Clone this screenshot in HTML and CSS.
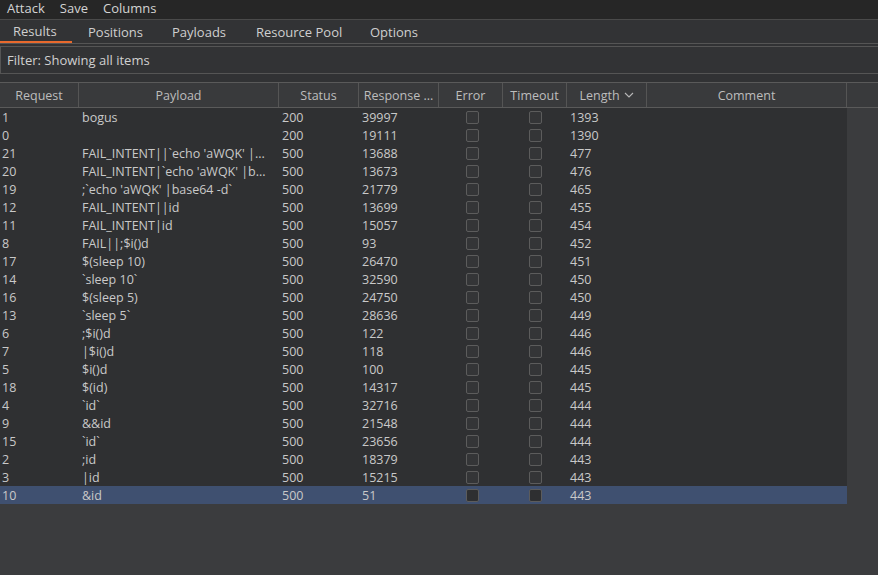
FILE: index.html
```html
<!DOCTYPE html>
<html>
<head>
<meta charset="utf-8">
<link rel="stylesheet" href="styles.css">
</head>
<body>
<div class="menubar">
  <span class="menu-item">Attack</span>
  <span class="menu-item">Save</span>
  <span class="menu-item">Columns</span>
</div>
<div class="tabs">
  <span class="tab active">Results</span>
  <span class="tab">Positions</span>
  <span class="tab">Payloads</span>
  <span class="tab">Resource Pool</span>
  <span class="tab">Options</span>
</div>
<div class="filter-wrap">
  <div class="filter">Filter: Showing all items</div>
</div>
<div class="table-area">
  <div class="thead">
    <div class="th c-req">Request</div>
    <div class="th c-pay">Payload</div>
    <div class="th c-st">Status</div>
    <div class="th c-resp">Response ...</div>
    <div class="th c-err">Error</div>
    <div class="th c-to">Timeout</div>
    <div class="th c-len">Length <svg class="sort" width="10" height="6" viewBox="0 0 10 6"><path d="M1 1 L5 5 L9 1" fill="none" stroke="#b8b8b8" stroke-width="1.1"/></svg></div>
    <div class="th c-com">Comment</div>
    <div class="th c-pad"></div>
  </div>
  <div class="tbody" id="tbody"></div>
</div>
<script>
var rows=[["1","bogus","200","39997","1393"],["0","","200","19111","1390"],["21","FAIL_INTENT||`echo 'aWQK' |...","500","13688","477"],["20","FAIL_INTENT|`echo 'aWQK' |b...","500","13673","476"],["19",";`echo 'aWQK' |base64 -d`","500","21779","465"],["12","FAIL_INTENT||id","500","13699","455"],["11","FAIL_INTENT|id","500","15057","454"],["8","FAIL||;$i()d","500","93","452"],["17","$(sleep 10)","500","26470","451"],["14","`sleep 10`","500","32590","450"],["16","$(sleep 5)","500","24750","450"],["13","`sleep 5`","500","28636","449"],["6",";$i()d","500","122","446"],["7","|$i()d","500","118","446"],["5","$i()d","500","100","445"],["18","$(id)","500","14317","445"],["4","`id`","500","32716","444"],["9","&&id","500","21548","444"],["15","`id`","500","23656","444"],["2",";id","500","18379","443"],["3","|id","500","15215","443"],["10","&id","500","51","443"]];
var tb=document.getElementById('tbody');
rows.forEach(function(r,i){
  var d=document.createElement('div');
  d.className='tr'+(i===rows.length-1?' sel':'');
  function c(cls,t){var s=document.createElement('div');s.className='td '+cls;if(t!==null)s.textContent=t;d.appendChild(s);return s;}
  c('c-req',r[0]);c('c-pay',r[1]);c('c-st',r[2]);c('c-resp',r[3]);
  c('c-err ck',null).appendChild(Object.assign(document.createElement('span'),{className:'box'}));
  c('c-to ck',null).appendChild(Object.assign(document.createElement('span'),{className:'box'}));
  c('c-len',r[4]);c('c-com','');
  tb.appendChild(d);
});
</script>
</body>
</html>
```
FILE: styles.css
```css
html,body{margin:0;padding:0;}
body{
  width:878px;height:575px;overflow:hidden;
  background:#3b3c3e;
  font-family:"Open Sans","Noto Sans",sans-serif;
  font-size:12.5px;color:#cfcfcf;
}
.menubar{
  height:19px;background:#262626;display:flex;align-items:flex-start;
  padding-left:7px;border-bottom:1px solid #4a4a4a;box-sizing:content-box;
}
.menu-item{margin-right:15px;color:#d4d4d4;font-size:13px;line-height:17px;}
.tabs{
  height:23px;background:#323335;display:flex;align-items:stretch;
  border-bottom:1px solid #555;
}
.tab{
  display:flex;align-items:center;padding:0 14px 0 16px;color:#cfcfcf;font-size:13px;
  box-sizing:border-box;white-space:nowrap;
}
.tab:nth-child(1){width:72px;padding-left:13px;}
.tab:nth-child(2){width:84px;}
.tab:nth-child(3){width:84px;}
.tab:nth-child(4){width:114px;}
.tab.active{border-bottom:2px solid #e8692d;padding-top:1px;}
.filter-wrap{background:#313234;padding:2px 0 8px 0;}
.filter{
  height:26px;border:1px solid #555;border-right:none;background:#323335;
  display:flex;align-items:center;padding-left:6px;color:#d0d0d0;font-size:13px;
}
.table-area{background:#3b3c3e;}
.thead{
  display:flex;height:24px;background:#393a3c;
  border-top:1px solid #5a5a5a;border-bottom:1px solid #5a5a5a;
}
.th{
  display:flex;align-items:center;justify-content:center;
  border-right:1px solid #555;box-sizing:border-box;color:#bdbdbd;font-size:12.5px;
}
.th.c-pad{border-right:none;flex:1;}
.sort{margin-left:4px;}
.c-req{width:79px;}
.c-pay{width:200px;}
.c-st{width:80px;}
.c-resp{width:80px;}
.c-err{width:64px;}
.c-to{width:64px;}
.c-len{width:80px;}
.c-com{width:200px;}
.tbody{width:847px;background:#2f3032;}
.tr{display:flex;height:18px;}
.tr.sel{background:#3f5070;}
.td{
  display:flex;align-items:center;box-sizing:border-box;padding-left:3px;
  white-space:nowrap;overflow:hidden;color:#c9c9c9;font-size:12.5px;
}
.td.c-req{padding-left:2px;}
.td.ck{justify-content:center;padding-left:0;}
.box{
  width:11px;height:11px;border:1px solid #5c5c5c;border-radius:2px;background:#343537;
  display:block;
}
.td.c-err .box{margin-left:2px;}
.tr.sel .box{background:#2e2f31;}
```
